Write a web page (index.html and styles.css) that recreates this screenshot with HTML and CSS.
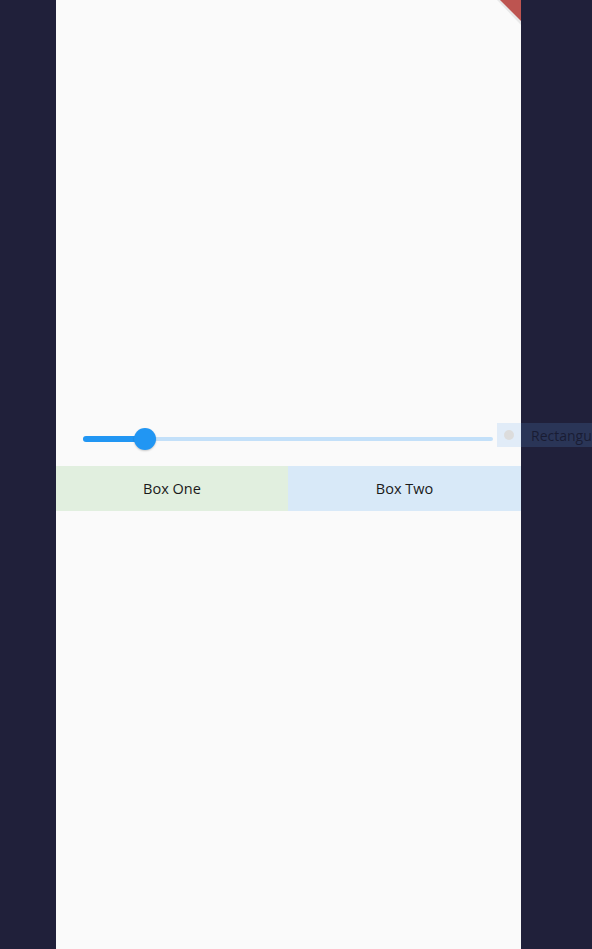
FILE: index.html
```html
<!DOCTYPE html>
<html>
<head>
<meta charset="utf-8">
<link rel="stylesheet" href="styles.css">
</head>
<body>
<div class="screen">
  <div class="phone">
    <svg class="banner" width="24" height="26" viewBox="0 0 24 26">
      <polygon points="0,0 24,0 24,25" fill="#000" opacity="0.07"/>
      <polygon points="3,0 24,0 24,21" fill="#bd5450"/>
    </svg>
    <div class="spacer"></div>
    <div class="slider">
      <div class="track">
        <div class="active"></div>
        <div class="thumb"></div>
      </div>
    </div>
    <div class="boxes">
      <div class="box one">Box One</div>
      <div class="box two">Box Two</div>
    </div>
  </div>
  <div class="tip">
    <span class="dot"></span>
    <span class="tip-text">Rectangular</span>
  </div>
</div>
</body>
</html>
```

FILE: styles.css
```css
html, body {
  margin: 0;
  padding: 0;
  background: #20203a;
  width: 592px;
  height: 949px;
  overflow: hidden;
  font-family: "Open Sans", Roboto, "Liberation Sans", sans-serif;
}
.screen {
  position: relative;
  width: 592px;
  height: 949px;
  display: flex;
  padding-left: 56px;
  box-sizing: border-box;
}
.phone {
  position: relative;
  width: 465px;
  height: 949px;
  background: #fafafa;
  overflow: hidden;
  display: flex;
  flex-direction: column;
}
.banner {
  position: absolute;
  top: 0;
  right: 0;
}
.spacer {
  height: 415px;
  flex: none;
}
.slider {
  height: 48px;
  display: flex;
  align-items: center;
  padding: 0 28px 0 27px;
  flex: none;
}
.track {
  position: relative;
  flex: 1;
  height: 4px;
  border-radius: 2px;
  background: #c3e0f9;
}
.active {
  position: absolute;
  left: 0;
  top: -1px;
  width: 62px;
  height: 6px;
  border-radius: 3px;
  background: #2196f3;
}
.thumb {
  position: absolute;
  left: 51px;
  top: -9px;
  width: 22px;
  height: 22px;
  border-radius: 50%;
  background: #2196f3;
  box-shadow: 0 1px 2px rgba(0,0,0,0.2);
}
.boxes {
  margin-top: 3px;
  display: flex;
  height: 45px;
  flex: none;
}
.box {
  display: flex;
  align-items: center;
  justify-content: center;
  font-size: 14.5px;
  color: #1a1a1a;
}
.one {
  width: 232px;
  background: #e1efdf;
}
.two {
  flex: 1;
  background: #d8e9f8;
}
.tip {
  position: absolute;
  left: 497px;
  top: 423px;
  height: 24px;
  width: 95px;
  overflow: hidden;
  background: rgba(100, 170, 240, 0.16);
  display: flex;
  align-items: center;
  white-space: nowrap;
}
.dot {
  width: 10px;
  height: 10px;
  border-radius: 50%;
  background: #dcdcdc;
  margin-left: 7px;
  flex: none;
}
.tip-text {
  margin-left: 17px;
  font-size: 14px;
  color: rgba(20, 20, 40, 0.75);
}
```
